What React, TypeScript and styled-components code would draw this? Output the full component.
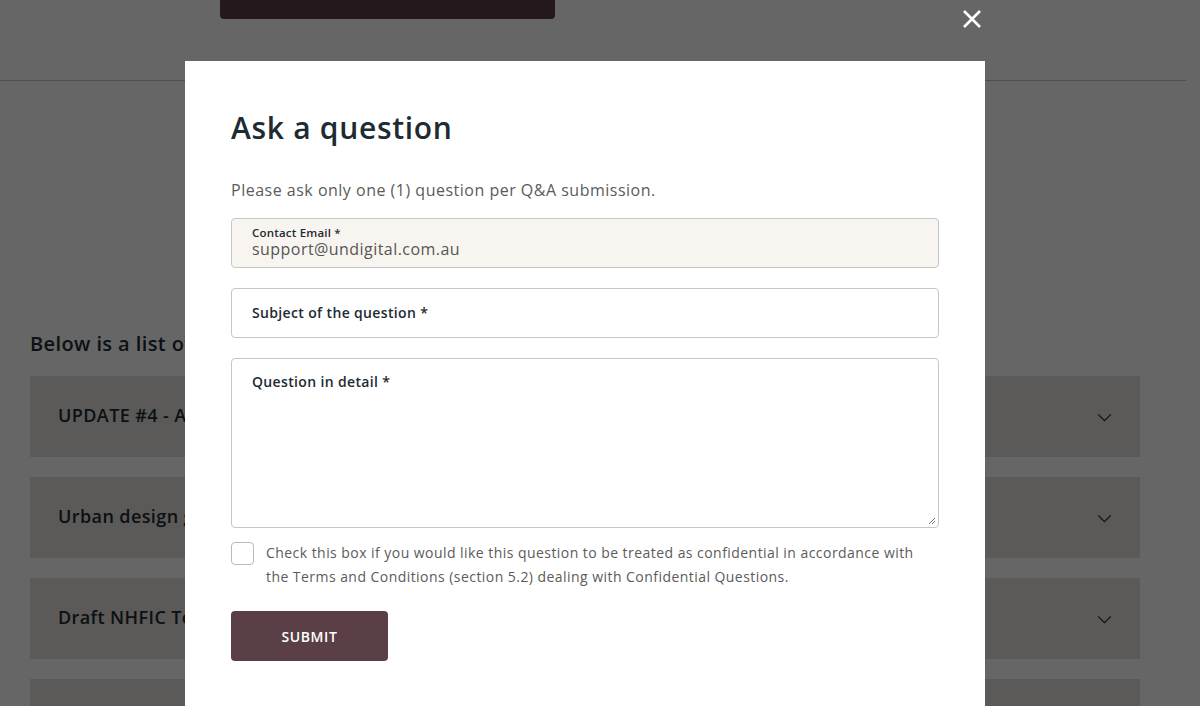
import { createGlobalStyle, styled } from "styled-components";

const GlobalStyle = createGlobalStyle`
  html, body {
    margin: 0;
    padding: 0;
    height: 100%;
    overflow: hidden;
    background: #ffffff;
    font-family: "Open Sans", "Liberation Sans", sans-serif;
    color: #1d2b33;
  }
  * {
    box-sizing: border-box;
  }
`;

const topics = [
  "UPDATE #4 - Addendum to the Request for Proposal",
  "Urban design guidelines and planning requirements",
  "Draft NHFIC Term Sheet and financing structure",
  "Community housing provider eligibility",
];

export default function App() {
  return (
    <>
      <GlobalStyle />
      <Page>
        <TopBar>
          <TopButton />
        </TopBar>
        <Content>
          <ListHeading>Below is a list of questions and answers</ListHeading>
          <Accordion>
            {topics.map((t) => (
              <AccordionItem key={t}>
                <span>{t}</span>
                <Chevron viewBox="0 0 16 10">
                  <path d="M1 1.5 L8 8.5 L15 1.5" />
                </Chevron>
              </AccordionItem>
            ))}
          </Accordion>
        </Content>
      </Page>

      <Overlay>
        <CloseButton aria-label="Close">
          <svg viewBox="0 0 20 20" width="20" height="20">
            <path d="M2 2 L18 18 M18 2 L2 18" />
          </svg>
        </CloseButton>
        <Modal>
          <Title>Ask a question</Title>
          <Intro>Please ask only one (1) question per Q&amp;A submission.</Intro>
          <Form>
            <Field $filled>
              <SmallLabel>Contact Email *</SmallLabel>
              <Value>support@undigital.com.au</Value>
            </Field>
            <Field>
              <FieldLabel>Subject of the question *</FieldLabel>
            </Field>
            <AreaField>
              <FieldLabel>Question in detail *</FieldLabel>
              <Grip viewBox="0 0 8 8">
                <path d="M7 1 L1 7 M7 4 L4 7" />
              </Grip>
            </AreaField>
            <CheckRow>
              <Box />
              <CheckText>
                Check this box if you would like this question to be treated as
                confidential in accordance with the Terms and Conditions
                (section 5.2) dealing with Confidential Questions.
              </CheckText>
            </CheckRow>
            <Submit>SUBMIT</Submit>
          </Form>
        </Modal>
      </Overlay>
    </>
  );
}

const Page = styled.div`
  width: 1200px;
`;

const TopBar = styled.div`
  height: 81px;
  margin-right: 14px;
  border-bottom: 1px solid #c4c4c4;
  padding-left: 220px;
`;

const TopButton = styled.div`
  width: 335px;
  height: 19px;
  background: #583f48;
  border-radius: 0 0 4px 4px;
`;

const Content = styled.div`
  padding: 250px 60px 0 30px;
`;

const ListHeading = styled.h2`
  margin: 0 0 19px;
  font-size: 20px;
  font-weight: 600;
  line-height: 26px;
  letter-spacing: 0.4px;
  color: #1d2b33;
`;

const Accordion = styled.div`
  display: flex;
  flex-direction: column;
  gap: 20px;
`;

const AccordionItem = styled.div`
  height: 81px;
  background: #e4e0dc;
  display: flex;
  align-items: center;
  justify-content: space-between;
  padding: 0 28px 4px;
  font-size: 18px;
  font-weight: 600;
  letter-spacing: 0.4px;
  color: #1d2b33;
`;

const Chevron = styled.svg`
  width: 15px;
  height: 9px;
  fill: none;
  stroke: #1d2b33;
  stroke-width: 1.4;
  margin-top: 6px;
`;

const Overlay = styled.div`
  position: fixed;
  inset: 0;
  background: rgba(0, 0, 0, 0.6);
  display: flex;
  justify-content: center;
  padding: 61px 30px 0 0;
`;

const CloseButton = styled.button`
  position: absolute;
  top: 9px;
  left: 962px;
  width: 20px;
  height: 20px;
  padding: 0;
  border: none;
  background: none;
  cursor: pointer;
  svg {
    display: block;
    fill: none;
    stroke: #ffffff;
    stroke-width: 2.6;
  }
`;

const Modal = styled.div`
  width: 800px;
  height: 700px;
  background: #ffffff;
  padding: 48px 46px 0;
`;

const Title = styled.h1`
  margin: 0;
  font-size: 30px;
  font-weight: 600;
  line-height: 38px;
  color: #1d2b33;
  letter-spacing: 0.7px;
`;

const Intro = styled.p`
  margin: 31px 0 0;
  font-size: 16px;
  line-height: 24px;
  letter-spacing: 0.5px;
  color: #5b5b5b;
`;

const Form = styled.div`
  margin-top: 16px;
  display: flex;
  flex-direction: column;
`;

const Field = styled.div<{ $filled?: boolean }>`
  height: 50px;
  border: 1px solid #c6c6c6;
  border-radius: 4px;
  background: ${(p) => (p.$filled ? "#f8f5f0" : "#ffffff")};
  padding: 0 20px;
  display: flex;
  flex-direction: column;
  justify-content: center;
  margin-bottom: 20px;
`;

const SmallLabel = styled.div`
  font-size: 11.5px;
  font-weight: 600;
  line-height: 14px;
  letter-spacing: 0.2px;
  color: #1d2b33;
  margin-top: -1px;
`;

const Value = styled.div`
  font-size: 16px;
  line-height: 19px;
  letter-spacing: 0.45px;
  color: #555555;
`;

const FieldLabel = styled.div`
  font-size: 14px;
  font-weight: 600;
  line-height: 18px;
  letter-spacing: 0.35px;
  color: #1d2b33;
`;

const AreaField = styled.div`
  position: relative;
  height: 170px;
  border: 1px solid #c6c6c6;
  border-radius: 4px;
  padding: 14px 20px;
  margin-bottom: 14px;
`;

const Grip = styled.svg`
  position: absolute;
  right: 2px;
  bottom: 2px;
  width: 8px;
  height: 8px;
  fill: none;
  stroke: #777777;
  stroke-width: 1;
`;

const CheckRow = styled.label`
  display: flex;
  align-items: flex-start;
  gap: 12px;
`;

const Box = styled.span`
  flex: none;
  width: 23px;
  height: 23px;
  border: 1px solid #b9b9b9;
  border-radius: 4px;
  background: #ffffff;
`;

const CheckText = styled.span`
  font-size: 14px;
  line-height: 24px;
  letter-spacing: 0.45px;
  color: #5b5b5b;
  margin-top: -1px;
`;

const Submit = styled.button`
  margin-top: 22px;
  width: 157px;
  height: 50px;
  border: none;
  border-radius: 4px;
  background: #5a3f47;
  color: #ffffff;
  font-family: inherit;
  font-size: 14px;
  font-weight: 600;
  letter-spacing: 0.6px;
  cursor: pointer;
`;
